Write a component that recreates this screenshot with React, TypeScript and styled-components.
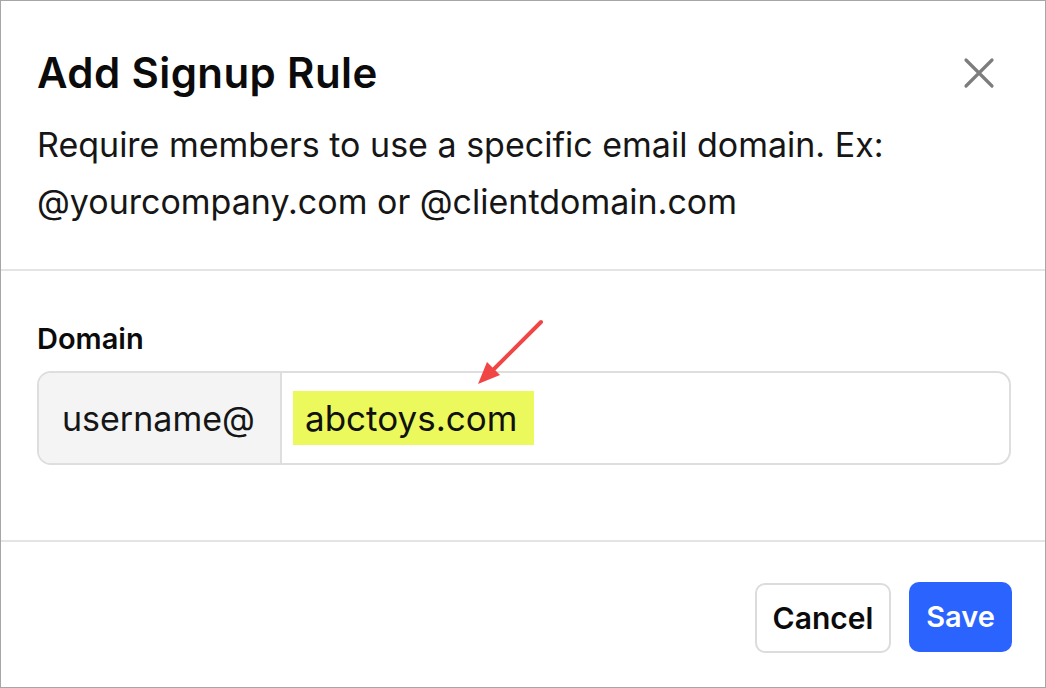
import styled, { createGlobalStyle } from "styled-components";

const GlobalStyle = createGlobalStyle`
  html, body {
    margin: 0;
    padding: 0;
    background: #ffffff;
  }
  * {
    box-sizing: border-box;
  }
`;

const App = () => {
  return (
    <>
      <GlobalStyle />
      <Modal>
        <Header>
          <TitleRow>
            <Title>Add Signup Rule</Title>
            <CloseButton aria-label="Close">
              <svg width="32" height="32" viewBox="0 0 32 32">
                <path
                  d="M3 3 L29 29 M29 3 L3 29"
                  stroke="#7d7d7d"
                  strokeWidth="3.2"
                  strokeLinecap="round"
                />
              </svg>
            </CloseButton>
          </TitleRow>
          <Description>
            Require members to use a specific email domain. Ex:
            <br />
            @yourcompany.com or @clientdomain.com
          </Description>
        </Header>
        <Body>
          <Label>Domain</Label>
          <InputGroup>
            <Addon>username@</Addon>
            <Field>
              <Highlight>abctoys.com</Highlight>
              {/* annotation arrow pointing at the value */}
              <Arrow width="80" height="80" viewBox="0 0 80 80">
                <path
                  d="M64 4 L14 54"
                  stroke="#f04646"
                  strokeWidth="4"
                  strokeLinecap="round"
                />
                <path d="M1 66 L10 44 L23 57 Z" fill="#f04646" />
              </Arrow>
            </Field>
          </InputGroup>
        </Body>
        <Footer>
          <CancelButton>Cancel</CancelButton>
          <SaveButton>Save</SaveButton>
        </Footer>
      </Modal>
    </>
  );
};

export default App;

const Modal = styled.div`
  width: 1046px;
  height: 688px;
  border: 1px solid #a6a6a6;
  display: flex;
  flex-direction: column;
  font-family: Inter, "Noto Sans", sans-serif;
  color: #111111;
  background: #ffffff;
`;

const Header = styled.header`
  height: 270px;
  padding: 46px 34px 0 36px;
  border-bottom: 2px solid #e4e4e7;
`;

const TitleRow = styled.div`
  display: flex;
  justify-content: space-between;
  align-items: center;
`;

const Title = styled.h1`
  margin: 0;
  font-size: 42px;
  font-weight: 600;
  line-height: 52px;
  letter-spacing: 0.4px;
  color: #0b0b0b;
`;

const CloseButton = styled.button`
  border: none;
  background: none;
  padding: 0;
  margin-right: 16px;
  width: 32px;
  height: 32px;
  display: flex;
  cursor: pointer;
`;

const Description = styled.p`
  margin: 17px 0 0;
  font-size: 34px;
  line-height: 57px;
  font-weight: 400;
  color: #161616;
`;

const Body = styled.section`
  height: 271px;
  padding: 48px 34px 0 36px;
  border-bottom: 2px solid #e4e4e7;
`;

const Label = styled.div`
  font-size: 29px;
  font-weight: 600;
  line-height: 36px;
  margin-bottom: 16px;
  margin-top: 2px;
  color: #0b0b0b;
`;

const InputGroup = styled.div`
  display: flex;
  height: 94px;
  margin-top: -2px;
  border: 2px solid #dedede;
  border-radius: 14px;
`;

const Addon = styled.div`
  width: 243px;
  display: flex;
  align-items: center;
  padding-left: 23px;
  background: #f4f4f4;
  border-right: 2px solid #dedede;
  border-radius: 12px 0 0 12px;
  font-size: 34px;
  color: #161616;
`;

const Field = styled.div`
  position: relative;
  flex: 1;
  display: flex;
  align-items: center;
  padding-left: 11px;
`;

const Highlight = styled.span`
  display: inline-flex;
  align-items: center;
  height: 54px;
  padding: 0 17px 0 12px;
  background: #ebf95c;
  font-size: 35px;
  color: #111111;
`;

const Arrow = styled.svg`
  position: absolute;
  left: 195px;
  top: -55px;
`;

const Footer = styled.footer`
  flex: 1;
  display: flex;
  justify-content: flex-end;
  align-items: center;
  gap: 18px;
  padding: 6px 33px 0 0;
`;

const BaseButton = styled.button`
  height: 70px;
  border-radius: 10px;
  font-family: Inter, "Noto Sans", sans-serif;
  font-weight: 600;
  cursor: pointer;
`;

const CancelButton = styled(BaseButton)`
  width: 136px;
  font-size: 30px;
  background: #ffffff;
  color: #0b0b0b;
  border: 2px solid #dcdcdc;
`;

const SaveButton = styled(BaseButton)`
  width: 103px;
  font-size: 29px;
  background: #2b63ff;
  color: #ffffff;
  border: none;
  margin-top: -2px;
`;
